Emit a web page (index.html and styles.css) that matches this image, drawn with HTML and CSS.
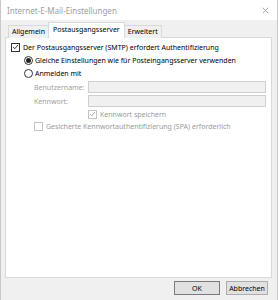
FILE: index.html
```html
<!DOCTYPE html>
<html lang="de">
<head>
  <meta charset="utf-8">
  <title>Internet-E-Mail-Einstellungen</title>
  <link rel="stylesheet" href="styles.css">
</head>
<body>
  <div class="dialog">
    <div class="titlebar">
      <span class="title">Internet-E-Mail-Einstellungen</span>
      <svg class="close" viewBox="0 0 10 10"><line x1="1" y1="1" x2="9" y2="9" /><line x1="9" y1="1" x2="1" y2="9" /></svg>
    </div>
    <div class="content">
      <div class="tabs">
        <div class="tab">Allgemein</div>
        <div class="tab active">Postausgangsserver</div>
        <div class="tab">Erweitert</div>
      </div>
      <div class="panel">
        <label class="row">
          <span class="check on"><svg viewBox="0 0 10 10"><polyline points="1.5,5 4,7.5 8.5,2" /></svg></span>
          Der Postausgangsserver (SMTP) erfordert Authentifizierung
        </label>
        <div class="group">
          <label class="row">
            <span class="radio on"></span>
            Gleiche Einstellungen wie für Posteingangsserver verwenden
          </label>
          <label class="row">
            <span class="radio"></span>
            Anmelden mit
          </label>
          <div class="fields">
            <div class="field">
              <span class="lbl">Benutzername:</span>
              <span class="input"></span>
            </div>
            <div class="field">
              <span class="lbl">Kennwort:</span>
              <span class="input"></span>
            </div>
            <label class="row off save">
              <span class="check dim"><svg viewBox="0 0 10 10"><polyline points="1.5,5 4,7.5 8.5,2" /></svg></span>
              Kennwort speichern
            </label>
            <label class="row off">
              <span class="check dim"></span>
              Gesicherte Kennwortauthentifizierung (SPA) erforderlich
            </label>
          </div>
        </div>
      </div>
      <div class="buttons">
        <button class="btn ok">OK</button>
        <button class="btn">Abbrechen</button>
      </div>
    </div>
  </div>
</body>
</html>
```

FILE: styles.css
```css
html, body {
  margin: 0; padding: 0;
  background: #f0f0f0;
  font-family: 'Noto Sans', 'Open Sans', sans-serif;
  font-size: 7px;
  color: #000;
}
.dialog {
  width: 278px; height: 300px;
  box-sizing: border-box;
  display: flex; flex-direction: column;
  border-left: 1px solid #c8c8c8;
  border-right: 1px solid #c8c8c8;
  overflow: hidden;
}
.titlebar {
  height: 20px;
  background: #fff;
  display: flex; align-items: center; justify-content: space-between;
  padding: 0 8px 0 6px;
  flex: none;
}
.title { color: #a0a0a0; font-size: 8px; }
.close { width: 7px; height: 7px; stroke: #9a9a9a; stroke-width: 1.2; }

.content {
  flex: 1;
  display: flex; flex-direction: column;
  padding: 3px 5px 0 4px;
}
.tabs {
  display: flex; align-items: flex-end;
  height: 15px;
  padding-left: 3px;
  position: relative;
  z-index: 1;
}
.tab {
  height: 12px;
  line-height: 12px;
  padding: 0 3px;
  border: 1px solid #d9d9d9;
  border-bottom: none;
  background: #f0f0f0;
  margin-right: -1px;
}
.tab.active {
  height: 15px;
  line-height: 14px;
  background: #fff;
  padding: 0 4px;
}
.panel {
  background: #fff;
  border: 1px solid #d9d9d9;
  height: 241px;
  margin-top: -1px;
  padding: 4px 5px 0 5px;
  box-sizing: border-box;
  display: flex; flex-direction: column; gap: 3px;
}
.row {
  display: flex; align-items: center; gap: 2px;
  height: 10px;
  white-space: nowrap;
}
.group {
  padding-left: 13px;
  display: flex; flex-direction: column; gap: 3px;
}
.check {
  width: 9px; height: 9px;
  border: 1px solid #333;
  box-sizing: border-box;
  background: #fff;
  display: flex; align-items: center; justify-content: center;
  margin-right: 1px;
}
.check svg { width: 8px; height: 8px; fill: none; stroke: #222; stroke-width: 1.3; }
.check.dim { border-color: #c4c4c4; }
.check.dim svg { stroke: #a8a8a8; }
.radio {
  width: 9px; height: 9px;
  border: 1px solid #333;
  border-radius: 50%;
  box-sizing: border-box;
  background: #fff;
  display: flex; align-items: center; justify-content: center;
}
.radio.on::after {
  content: '';
  width: 5px; height: 5px; border-radius: 50%;
  background: #222;
}
.fields {
  padding-left: 10px;
  display: flex; flex-direction: column; gap: 2px;
}
.field {
  display: flex; align-items: center;
  height: 12px;
}
.lbl { width: 54px; color: #a0a0a0; }
.input {
  flex: 1;
  height: 12px;
  box-sizing: border-box;
  border: 1px solid #cfcfcf;
  background: #f0f0f0;
}
.off { color: #9a9a9a; }
.save { padding-left: 54px; }

.buttons {
  display: flex; justify-content: flex-end; gap: 6px;
  padding: 3px 4px 0 0;
}
.btn {
  font-family: inherit; font-size: 7px;
  color: #000;
  width: 42px; height: 14px;
  padding: 0;
  border: 1px solid #adadad;
  background: #e1e1e1;
}
.btn.ok { width: 46px; border-color: #7a7a7a; }
```
